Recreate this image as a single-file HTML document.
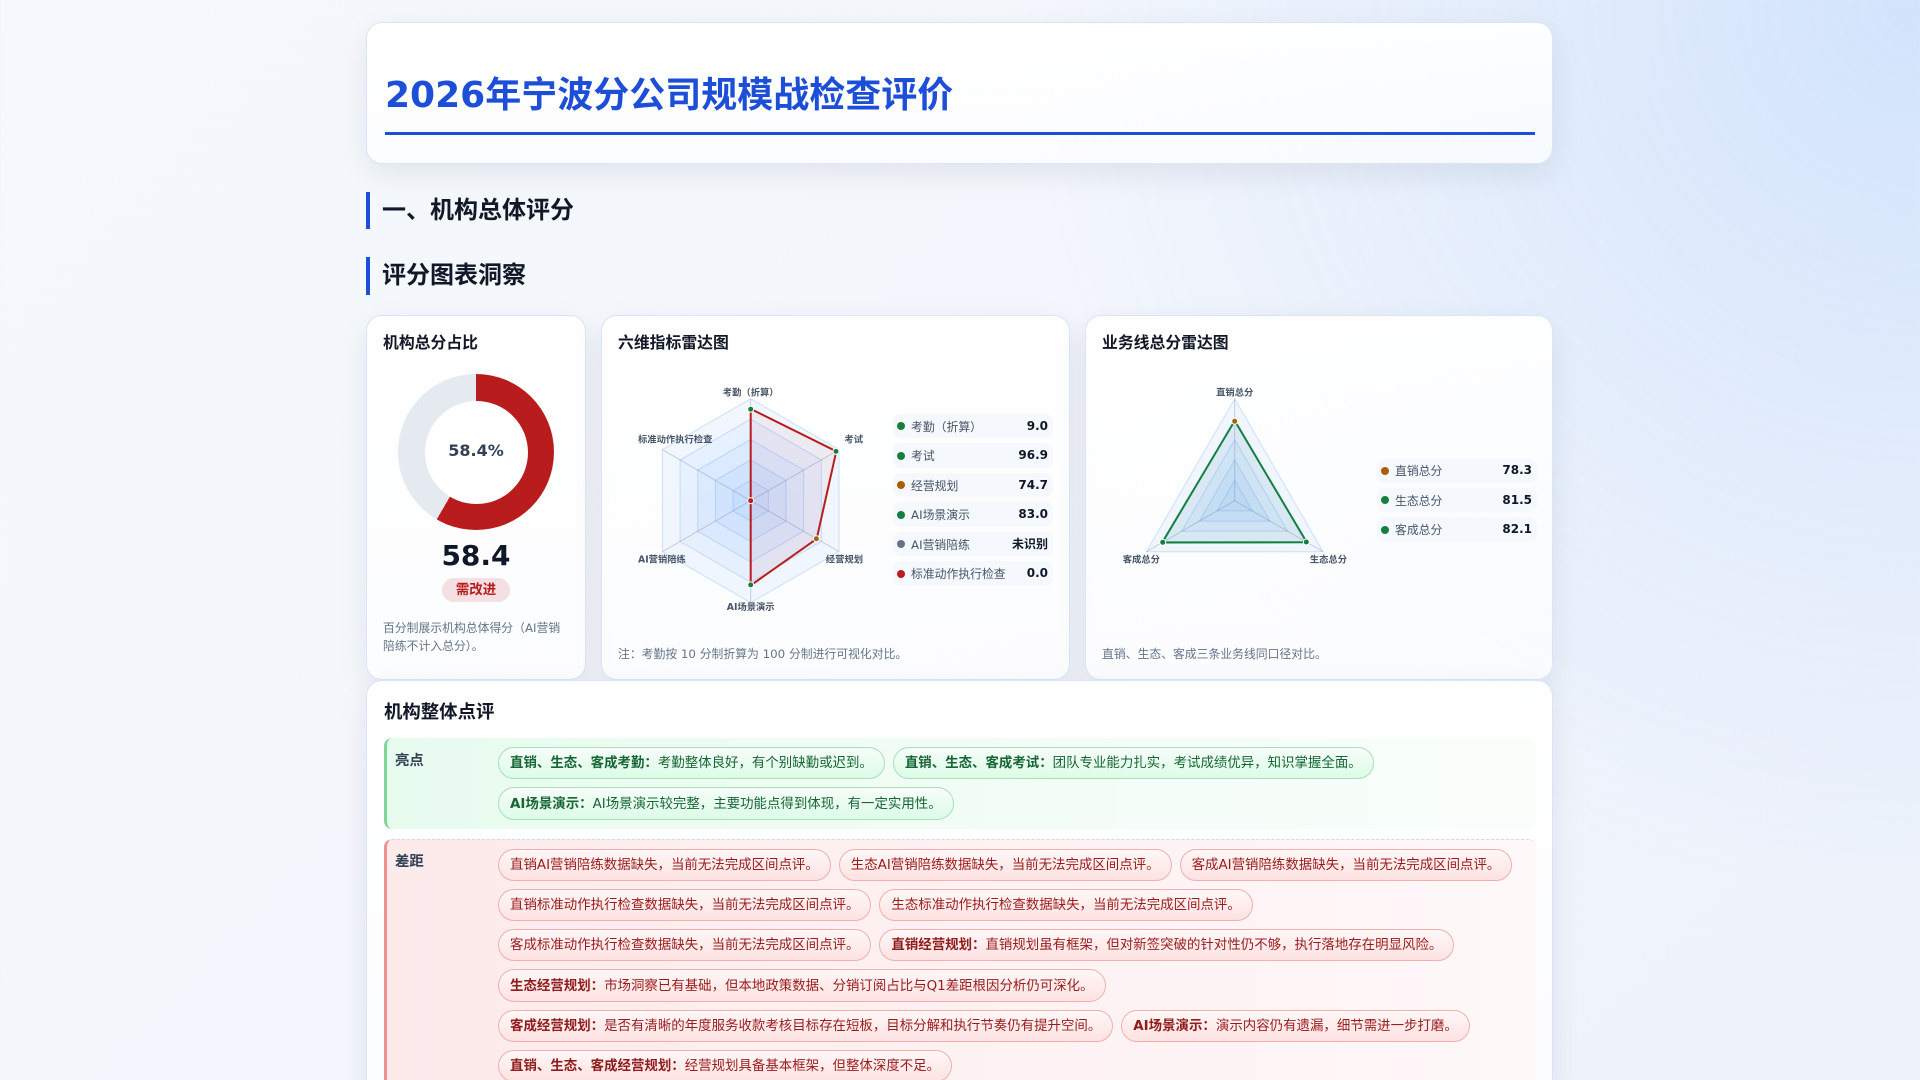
<!DOCTYPE html>
<html lang="zh-CN">
<head>
<meta charset="utf-8">
<title>2026年宁波分公司规模战检查评价</title>
<style>
*{box-sizing:border-box;margin:0;padding:0}
html,body{width:1920px;height:1080px;overflow:hidden}
body{position:relative;font-family:"DejaVu Sans","Noto Sans CJK SC",sans-serif;color:#0f172a;
background:radial-gradient(circle at 100% 0,rgba(96,165,250,.22) 0,rgba(96,165,250,.11) 420px,rgba(96,165,250,0) 900px),linear-gradient(135deg,#f5f8fc 0%,#f3f6fc 50%,#edf2fb 100%)}
.card{position:absolute;border:1px solid #d9e5fb;border-radius:16px;background:linear-gradient(180deg,rgba(255,255,255,.94),rgba(255,255,255,.72));box-shadow:0 10px 30px rgba(15,23,42,.08)}
.head{left:366px;top:22px;width:1187px;height:142px}
h1{position:absolute;left:385px;top:72px;font-size:36px;line-height:48px;font-weight:700;color:#1d4ed8;white-space:nowrap}
.rule{position:absolute;left:385px;top:132px;width:1150px;height:3px;background:#1d4ed8}
.sec{position:absolute;left:366px;width:300px;border-left:4px solid #1d4ed8;padding-left:12px;font-size:24px;font-weight:700;color:#111827;white-space:nowrap}
h3{position:absolute;font-size:15.84px;line-height:24px;font-weight:700;color:#111827;white-space:nowrap}
.note{position:absolute;font-size:11.84px;line-height:18px;color:#64748b}
.donut{position:absolute;left:398px;top:374px;width:156px;height:156px;border-radius:50%;background:conic-gradient(#b91c1c 0 58.4%,#e5e9f0 58.4% 100%)}
.donut i{position:absolute;left:26.5px;top:26.5px;width:103px;height:103px;border-radius:50%;background:#fff}
.pct{position:absolute;left:398px;top:439px;width:156px;text-align:center;font-size:16px;line-height:24px;font-weight:700;color:#334155}
.big{position:absolute;left:367px;top:536px;width:218px;text-align:center;font-size:28px;line-height:40px;font-weight:700;color:#0f172a}
.tag{position:absolute;left:442px;top:578px;width:68px;height:24px;border-radius:12px;background:#f4e0e2;text-align:center;font-size:13.44px;line-height:25px;font-weight:700;color:#b91c1c}
.legend{position:absolute;width:160px;display:flex;flex-direction:column;gap:5.1px}
.row{height:24.4px;background:#f5f8fc;border-radius:8px;display:flex;align-items:center;padding:0 5px 0 4px;font-size:11.84px;color:#475569}
.row u{display:block;width:8px;height:8px;border-radius:50%;margin-right:6px;flex:none;text-decoration:none}
.row b{margin-left:auto;color:#0f172a;font-size:12px;font-weight:700;position:relative;top:-.5px}
.g{background:#15803d}.a{background:#a85f0a}.r{background:#b91c1c}.s{background:#64748b}
svg{position:absolute;overflow:visible}
svg text{font-size:9.3px;font-weight:600;fill:#475569;font-family:"DejaVu Sans","Noto Sans CJK SC",sans-serif}
.hx{fill:rgba(80,150,250,.07);stroke:rgba(59,130,246,.22);stroke-width:1}
.ax{stroke:rgba(100,116,139,.3);stroke-width:1}
.rev{left:366px;top:680px;width:1187px;height:480px;border-bottom:0}
.block{position:absolute;left:384px;width:1152px;border-left:3px solid;border-radius:8px}
.block .lb{position:absolute;left:8px;font-size:14.4px;line-height:20px;font-weight:700;color:#334155}
.block .pills{position:absolute;left:111px;right:0;display:flex;flex-wrap:wrap;gap:8px}
.pl{display:block;height:32px;padding:0 11px;border:1px solid;border-radius:16.5px;font-size:13.44px;line-height:31px;white-space:nowrap}
.t{height:33px;line-height:33px}
.good{top:738px;height:91px;border-color:#7fd69b;background:linear-gradient(90deg,#e8fbef,#fafefb)}
.good .pl{color:#166534;border-color:#a9dfbb;background:linear-gradient(180deg,#f7fdf9,#dcfce7)}
.good b{color:#166534}
.bad{top:839px;height:260px;border-color:#f09090;border-top:1px dashed #d5d9e6;background:linear-gradient(90deg,#fdeaeb,#fef8f9)}
.bad .pl{color:#991b1b;border-color:#f0b0b0;background:linear-gradient(180deg,#fff7f7,#fee2e2)}
.bad b{color:#8f1b1b}
</style>
</head>
<body>
<div class="card head"></div>
<h1>2026年宁波分公司规模战检查评价</h1>
<div class="rule"></div>

<div class="sec" style="top:192px;height:37px;line-height:36px">一、机构总体评分</div>
<div class="sec" style="top:257px;height:38px;line-height:36px">评分图表洞察</div>

<div class="card" style="left:366px;top:315px;width:219.5px;height:365px"></div>
<div class="card" style="left:601px;top:315px;width:469px;height:365px"></div>
<div class="card" style="left:1085px;top:315px;width:468px;height:365px"></div>

<h3 style="left:383px;top:331px">机构总分占比</h3>
<div class="donut"><i></i></div>
<div class="pct">58.4%</div>
<div class="big">58.4</div>
<div class="tag">需改进</div>
<div class="note" style="left:383px;top:619px;width:186px">百分制展示机构总体得分（AI营销陪练不计入总分）。</div>

<h3 style="left:618px;top:331px">六维指标雷达图</h3>
<svg style="left:630px;top:380px" width="260" height="240" viewBox="630 380 260 240">
<polygon class="hx" points="750.7,398.7 839.03,449.7 839.03,551.7 750.7,602.7 662.37,551.7 662.37,449.7"/>
<polygon class="hx" points="750.7,419.1 821.37,459.9 821.37,541.5 750.7,582.3 680.03,541.5 680.03,459.9"/>
<polygon class="hx" points="750.7,439.5 803.7,470.1 803.7,531.3 750.7,561.9 697.7,531.3 697.7,470.1"/>
<polygon class="hx" points="750.7,459.9 786.03,480.3 786.03,521.1 750.7,541.5 715.37,521.1 715.37,480.3"/>
<polygon class="hx" points="750.7,480.3 768.37,490.5 768.37,510.9 750.7,521.1 733.03,510.9 733.03,490.5"/>
<line class="ax" x1="750.7" y1="500.7" x2="750.7" y2="398.7"/>
<line class="ax" x1="750.7" y1="500.7" x2="839.03" y2="449.7"/>
<line class="ax" x1="750.7" y1="500.7" x2="839.03" y2="551.7"/>
<line class="ax" x1="750.7" y1="500.7" x2="750.7" y2="602.7"/>
<line class="ax" x1="750.7" y1="500.7" x2="662.37" y2="551.7"/>
<line class="ax" x1="750.7" y1="500.7" x2="662.37" y2="449.7"/>
<polygon points="750.7,408.9 836.3,451.3 816.7,538.8 750.7,585.4 750.7,500.7 750.7,500.7" fill="rgba(185,28,28,.06)" stroke="#b91c1c" stroke-width="2"/>
<circle cx="750.7" cy="409.2" r="3" fill="#15803d" stroke="#fff"/>
<circle cx="836" cy="451.4" r="3" fill="#15803d" stroke="#fff"/>
<circle cx="816.4" cy="538.7" r="3" fill="#a85f0a" stroke="#fff"/>
<circle cx="750.7" cy="584.9" r="3" fill="#15803d" stroke="#fff"/>
<circle cx="750.7" cy="500.7" r="3" fill="#b91c1c" stroke="#fff"/>
<text x="750.7" y="395.3" text-anchor="middle">考勤（折算）</text>
<text x="638" y="442.5">标准动作执行检查</text>
<text x="863" y="442.5" text-anchor="end">考试</text>
<text x="863" y="562.5" text-anchor="end">经营规划</text>
<text x="638" y="562.5">AI营销陪练</text>
<text x="750.7" y="610" text-anchor="middle">AI场景演示</text>
</svg>
<div class="legend" style="left:893px;top:414px">
<div class="row"><u class="g"></u>考勤（折算）<b>9.0</b></div>
<div class="row"><u class="g"></u>考试<b>96.9</b></div>
<div class="row"><u class="a"></u>经营规划<b>74.7</b></div>
<div class="row"><u class="g"></u>AI场景演示<b>83.0</b></div>
<div class="row"><u class="s"></u>AI营销陪练<b>未识别</b></div>
<div class="row"><u class="r"></u>标准动作执行检查<b>0.0</b></div>
</div>
<div class="note" style="left:618px;top:645px;white-space:nowrap">注：考勤按 10 分制折算为 100 分制进行可视化对比。</div>

<h3 style="left:1102px;top:331px">业务线总分雷达图</h3>
<svg style="left:1110px;top:380px" width="260" height="240" viewBox="1110 380 260 240">
<polygon class="hx" points="1234.7,398.7 1323.03,551.7 1146.37,551.7"/>
<polygon class="hx" points="1234.7,419.1 1305.37,541.5 1164.03,541.5"/>
<polygon class="hx" points="1234.7,439.5 1287.7,531.3 1181.7,531.3"/>
<polygon class="hx" points="1234.7,459.9 1270.03,521.1 1199.37,521.1"/>
<polygon class="hx" points="1234.7,480.3 1252.37,510.9 1217.03,510.9"/>
<line class="ax" x1="1234.7" y1="500.7" x2="1234.7" y2="398.7"/>
<line class="ax" x1="1234.7" y1="500.7" x2="1323.03" y2="551.7"/>
<line class="ax" x1="1234.7" y1="500.7" x2="1146.37" y2="551.7"/>
<polygon points="1234.7,420.8 1306.7,542.3 1162.2,542.55" fill="rgba(21,128,61,.06)" stroke="#15803d" stroke-width="2"/>
<circle cx="1234.7" cy="421.3" r="3" fill="#a85f0a" stroke="#fff"/>
<circle cx="1306.3" cy="542" r="3" fill="#15803d" stroke="#fff"/>
<circle cx="1162.7" cy="542.3" r="3" fill="#15803d" stroke="#fff"/>
<text x="1234.7" y="395.3" text-anchor="middle">直销总分</text>
<text x="1347" y="562.5" text-anchor="end">生态总分</text>
<text x="1122.7" y="562.5">客成总分</text>
</svg>
<div class="legend" style="left:1377px;top:458.5px">
<div class="row"><u class="a"></u>直销总分<b>78.3</b></div>
<div class="row"><u class="g"></u>生态总分<b>81.5</b></div>
<div class="row"><u class="g"></u>客成总分<b>82.1</b></div>
</div>
<div class="note" style="left:1102px;top:645px;white-space:nowrap">直销、生态、客成三条业务线同口径对比。</div>

<div class="card rev"></div>
<h3 style="left:384px;top:700px;font-size:18.4px;line-height:26px">机构整体点评</h3>

<div class="block good">
<div class="lb" style="top:13px">亮点</div>
<div class="pills" style="top:9px">
<span class="pl"><b>直销、生态、客成考勤：</b>考勤整体良好，有个别缺勤或迟到。</span>
<span class="pl"><b>直销、生态、客成考试：</b>团队专业能力扎实，考试成绩优异，知识掌握全面。</span>
<span class="pl t"><b>AI场景演示：</b>AI场景演示较完整，主要功能点得到体现，有一定实用性。</span>
</div>
</div>

<div class="block bad">
<div class="lb" style="top:12px">差距</div>
<div class="pills" style="top:9px">
<span class="pl">直销AI营销陪练数据缺失，当前无法完成区间点评。</span>
<span class="pl">生态AI营销陪练数据缺失，当前无法完成区间点评。</span>
<span class="pl">客成AI营销陪练数据缺失，当前无法完成区间点评。</span>
<span class="pl">直销标准动作执行检查数据缺失，当前无法完成区间点评。</span>
<span class="pl">生态标准动作执行检查数据缺失，当前无法完成区间点评。</span>
<span class="pl">客成标准动作执行检查数据缺失，当前无法完成区间点评。</span>
<span class="pl"><b>直销经营规划：</b>直销规划虽有框架，但对新签突破的针对性仍不够，执行落地存在明显风险。</span>
<span class="pl t"><b>生态经营规划：</b>市场洞察已有基础，但本地政策数据、分销订阅占比与Q1差距根因分析仍可深化。</span>
<span class="pl"><b>客成经营规划：</b>是否有清晰的年度服务收款考核目标存在短板，目标分解和执行节奏仍有提升空间。</span>
<span class="pl"><b>AI场景演示：</b>演示内容仍有遗漏，细节需进一步打磨。</span>
<span class="pl"><b>直销、生态、客成经营规划：</b>经营规划具备基本框架，但整体深度不足。</span>
</div>
</div>
</body>
</html>
